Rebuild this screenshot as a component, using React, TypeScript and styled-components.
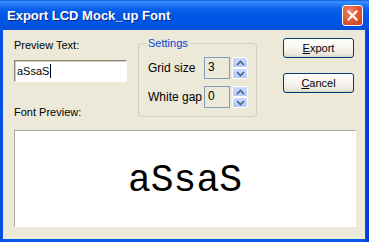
import styled, { createGlobalStyle } from 'styled-components'

const GlobalStyle = createGlobalStyle`
  html, body {
    margin: 0;
    padding: 0;
    background: #ece9d8;
  }
  body {
    font-family: "Liberation Sans", Arial, sans-serif;
    font-size: 11px;
  }
`

const App: React.FC = () => {
  return (
    <Window>
      <GlobalStyle />
      <TitleBar>
        <Title>Export LCD Mock_up Font</Title>
        <CloseButton>
          <svg width="11" height="11" viewBox="0 0 11 11">
            <path d="M1.5 1.5 L9.5 9.5 M9.5 1.5 L1.5 9.5" stroke="#fff" strokeWidth="2.2" strokeLinecap="square" />
          </svg>
        </CloseButton>
      </TitleBar>
      <Body>
        <TopRow>
          <LeftColumn>
            <Label>Preview Text:</Label>
            <TextField>
              aSsaS<Caret />
            </TextField>
            <Label $top={24}>Font Preview:</Label>
          </LeftColumn>

          <Group>
            <Legend>Settings</Legend>
            <SettingRow>
              <SettingLabel>Grid size</SettingLabel>
              <Spinner value="3" />
            </SettingRow>
            <SettingRow>
              <SettingLabel>White gap</SettingLabel>
              <Spinner value="0" />
            </SettingRow>
          </Group>

          <Buttons>
            <Button><u>E</u>xport</Button>
            <Button><u>C</u>ancel</Button>
          </Buttons>
        </TopRow>

        <PreviewBox>
          <PreviewText>aSsaS</PreviewText>
        </PreviewBox>
      </Body>
    </Window>
  )
}

const Spinner: React.FC<{ value: string }> = ({ value }) => {
  return (
    <SpinWrap>
      <NumberField>{value}</NumberField>
      <SpinButtons>
        <SpinButton>
          <svg width="9" height="6" viewBox="0 0 9 6">
            <path d="M1 5 L4.5 1.5 L8 5" fill="none" stroke="#4d6185" strokeWidth="1.6" />
          </svg>
        </SpinButton>
        <SpinButton>
          <svg width="9" height="6" viewBox="0 0 9 6">
            <path d="M1 1 L4.5 4.5 L8 1" fill="none" stroke="#4d6185" strokeWidth="1.6" />
          </svg>
        </SpinButton>
      </SpinButtons>
    </SpinWrap>
  )
}

export default App

const Window = styled.div`
  width: 369px;
  height: 242px;
  display: flex;
  flex-direction: column;
  background: linear-gradient(to right, #0a4be0 0px, #0055ea 3px, #0055ea 364px, #0831d9 369px);
  box-sizing: border-box;
`

const TitleBar = styled.div`
  height: 30px;
  flex-shrink: 0;
  display: flex;
  align-items: center;
  justify-content: space-between;
  padding: 0 4px 0 7px;
  background: linear-gradient(
    to bottom,
    #0a5ce8 0%,
    #3d93ff 6%,
    #2a80fb 12%,
    #0a61ec 30%,
    #0056e6 55%,
    #0053e2 85%,
    #0a4dd4 100%
  );
`

const Title = styled.span`
  color: #fff;
  font-family: "Liberation Sans", Arial, sans-serif;
  font-weight: bold;
  font-size: 13px;
  text-shadow: 1px 1px 0 #0a2a8a;
  padding-top: 1px;
`

const CloseButton = styled.div`
  width: 19px;
  height: 19px;
  margin-top: 1px;
  margin-right: 2px;
  display: flex;
  align-items: center;
  justify-content: center;
  border: 1px solid #fff;
  border-radius: 3px;
  background: radial-gradient(circle at 35% 30%, #f08a6c 0%, #e25a35 45%, #c8401d 100%);
`

const Body = styled.div`
  flex: 1;
  margin: 0 4px 3px 3px;
  padding: 8px 9px 12px 11px;
  background: #ece9d8;
  display: flex;
  flex-direction: column;
`

const TopRow = styled.div`
  display: flex;
  align-items: flex-start;
`

const LeftColumn = styled.div`
  width: 113px;
  display: flex;
  flex-direction: column;
`

const Label = styled.div<{ $top?: number }>`
  margin-top: ${p => p.$top ?? 1}px;
  line-height: 13px;
  color: #000;
`

const TextField = styled.div`
  margin-top: 8px;
  height: 22px;
  box-sizing: border-box;
  padding: 3px 2px;
  background: #fff;
  border-top: 1px solid #8a8778;
  border-left: 1px solid #8a8778;
  border-right: 1px solid #fff;
  border-bottom: 1px solid #fff;
  box-shadow: inset 1px 1px 0 #d0cdbd;
  font-size: 11px;
  line-height: 14px;
  display: flex;
  align-items: center;
`

const Caret = styled.span`
  display: inline-block;
  width: 1px;
  height: 14px;
  background: #000;
  margin-left: 1px;
`

const Group = styled.div`
  position: relative;
  margin-left: 11px;
  margin-top: 5px;
  width: 119px;
  height: 74px;
  box-sizing: border-box;
  border: 1px solid #d0d0bf;
  border-radius: 4px;
  padding: 13px 8px 0 9px;
  display: flex;
  flex-direction: column;
  gap: 7px;
`

const Legend = styled.span`
  position: absolute;
  top: -7px;
  left: 7px;
  padding: 0 2px;
  background: #ece9d8;
  color: #0046d5;
  line-height: 13px;
`

const SettingRow = styled.div`
  display: flex;
  align-items: center;
  justify-content: space-between;
  height: 22px;
`

const SettingLabel = styled.span`
  font-size: 12px;
  color: #000;
`

const SpinWrap = styled.div`
  display: flex;
  gap: 2px;
`

const NumberField = styled.div`
  width: 26px;
  height: 22px;
  box-sizing: border-box;
  border: 1px solid #7f9db9;
  padding: 2px 3px;
  font-size: 12px;
  line-height: 14px;
  background: #ece9d8;
`

const SpinButtons = styled.div`
  display: flex;
  flex-direction: column;
  gap: 0;
`

const SpinButton = styled.div`
  width: 16px;
  height: 11px;
  box-sizing: border-box;
  border: 1px solid #fff;
  border-radius: 2px;
  background: linear-gradient(to bottom, #cbdaff, #b4c8f6);
  display: flex;
  align-items: center;
  justify-content: center;
`

const Buttons = styled.div`
  margin-left: 26px;
  display: flex;
  flex-direction: column;
  gap: 15px;
`

const Button = styled.div`
  width: 71px;
  height: 20px;
  box-sizing: border-box;
  border: 1px solid #003c74;
  border-radius: 3px;
  background: linear-gradient(to bottom, #ffffff 0%, #f6f5f0 50%, #ebe8dc 85%, #d8d2c2 100%);
  display: flex;
  align-items: center;
  justify-content: center;
  font-size: 11px;
  color: #000;

  u {
    text-decoration: underline;
    text-underline-offset: 1px;
  }
`

const PreviewBox = styled.div`
  margin-top: 11px;
  height: 97px;
  box-sizing: border-box;
  background: #fff;
  border-top: 1px solid #aca899;
  border-left: 1px solid #aca899;
  border-right: 1px solid #fff;
  border-bottom: 1px solid #fff;
  display: flex;
  align-items: center;
  justify-content: center;
`

const PreviewText = styled.span`
  font-family: "Liberation Mono", "Courier New", monospace;
  font-size: 38px;
  line-height: 1;
  color: #000;
  margin-top: 4px;
`
